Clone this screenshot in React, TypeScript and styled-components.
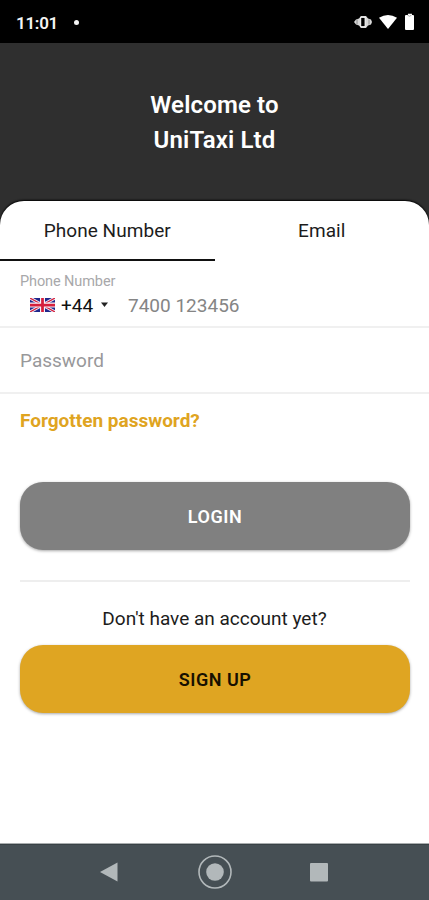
import React from 'react';
import styled, { createGlobalStyle } from 'styled-components';

const GlobalStyle = createGlobalStyle`
  * { box-sizing: border-box; }
  body { margin: 0; background: #fff; font-family: Roboto, "Liberation Sans", sans-serif; }
  button, input { font-family: inherit; }
`;

const Screen = styled.div`
  width: 429px;
  height: 900px;
  display: flex;
  flex-direction: column;
  overflow: hidden;
  background: #2f2f2f;
`;

const StatusBar = styled.header`
  height: 43px;
  flex: none;
  display: flex;
  align-items: center;
  padding: 2px 14px 0 16px;
  background: #000;
  color: #f4f4f4;
`;

const Clock = styled.span`
  width: 58px;
  font-size: 17px;
  font-weight: 600;
  line-height: 20px;
  letter-spacing: -0.3px;
`;

const Dot = styled.span`
  width: 5px;
  height: 5px;
  border-radius: 50%;
  background: #f4f4f4;
`;

const StatusIcons = styled.div`
  margin-left: auto;
  display: flex;
  align-items: center;
  margin-top: -2px;
`;

const Welcome = styled.h1`
  height: 158px;
  flex: none;
  margin: 0;
  padding-top: 45px;
  color: #fff;
  text-align: center;
  font-size: 24px;
  font-weight: 600;
  line-height: 35px;
  letter-spacing: 0.15px;
`;

const Card = styled.main`
  flex: 1;
  display: flex;
  flex-direction: column;
  background: #fff;
  border-radius: 24px 24px 0 0;
  box-shadow: 0 -1px 2px #000;
`;

const Tabs = styled.nav`
  display: flex;
  height: 60px;
`;

const Tab = styled.button<{ $active?: boolean }>`
  flex: 1;
  padding: 1px 0 0;
  border: 0;
  border-bottom: 2px solid ${(p) => (p.$active ? '#111' : 'transparent')};
  background: none;
  color: #1c1c1c;
  font-size: 19px;
  letter-spacing: 0.05px;
`;

const Field = styled.div`
  height: 66px;
  padding: 0 20px;
  border-bottom: 2px solid #f0f0f0;
`;

const PhoneField = styled(Field)`
  height: 67px;
  padding-top: 12px;
`;

const FieldLabel = styled.div`
  color: #a8a8aa;
  font-size: 14.5px;
  line-height: 17px;
  letter-spacing: -0.1px;
`;

const PhoneRow = styled.div`
  display: flex;
  align-items: center;
  height: 30px;
  padding-left: 10px;
`;

const DialCode = styled.span`
  width: 40px;
  margin-left: 6px;
  color: #111;
  font-size: 19px;
`;

const Placeholder = styled.span<{ $tone: string }>`
  color: ${(p) => p.$tone};
  font-size: 19px;
  letter-spacing: 0;
`;

const PasswordField = styled(Field)`
  display: flex;
  align-items: center;
`;

const Forgotten = styled.a`
  margin: 15px 20px 0;
  color: #dfa421;
  font-size: 19px;
  font-weight: 700;
  line-height: 24px;
`;

const Button = styled.button<{ $fill: string; $ink: string }>`
  height: 68px;
  margin: 0 19px 0 20px;
  padding: 0;
  border: 0;
  border-radius: 23px;
  background: ${(p) => p.$fill};
  color: ${(p) => p.$ink};
  box-shadow: 0 1px 3px rgba(0, 0, 0, 0.35);
  font-size: 18px;
  font-weight: 600;
  letter-spacing: 0.5px;
`;

const LoginButton = styled(Button)`
  margin-top: 49px;
`;

const Divider = styled.hr`
  width: 390px;
  height: 2px;
  margin: 30px 0 0 20px;
  border: 0;
  background: #eee;
`;

const Prompt = styled.p`
  margin: 25px 0 14px;
  color: #1c1c1c;
  text-align: center;
  font-size: 19px;
  line-height: 24px;
`;

const NavBar = styled.footer`
  height: 57px;
  flex: none;
  display: flex;
  align-items: center;
  justify-content: center;
  gap: 77px;
  padding-right: 1px;
  border-top: 1px solid #a9adae;
  background: #464f54;
  box-shadow: inset 0 1px 0 #394246;
`;

const UnionJack = () => (
  <svg width="25" height="14" viewBox="0 0 50 28">
    <rect width="50" height="28" rx="2" fill="#20278b" />
    <path d="M0 0 50 28M50 0 0 28" stroke="#f4f2fa" strokeWidth="6" />
    <path d="M0 0 50 28M50 0 0 28" stroke="#d51f3d" strokeWidth="2.5" />
    <path d="M25 0V28M0 14H50" stroke="#f8f4fa" strokeWidth="10" />
    <path d="M25 0V28M0 14H50" stroke="#d51f3d" strokeWidth="5.5" />
  </svg>
);

export default function App() {
  return (
    <>
      <GlobalStyle />
      <Screen>
        <StatusBar>
          <Clock>11:01</Clock>
          <Dot />
          <StatusIcons>
            <svg width="62" height="20" viewBox="0 0 62 20">
              <path d="M1 10 3 7.5l3-1L8 4h5l2 2.500 3 1 1 2.500-1 2.500-3 1L13 16H8l-2-2.500-3-1Z" fill="#d9d9d9" />
              <rect x="7.700" y="5.300" width="4.400" height="9.400" fill="#000" stroke="#fff" strokeWidth="1" />
              <path d="M4 7.500v5M16 7.500v5" stroke="#888" strokeWidth="1" />
              <path d="M26 5.800Q35 .2 44 5.800L35 17Z" fill="#fff" />
              <path d="M53 3h2V1.800h4V3h1q1 0 1 1v13q0 1-1 1h-7q-1 0-1-1V4q0-1 1-1Z" fill="#fff" />
              <path d="M54.500 3.200q2 2 4 0" stroke="#aaa" fill="none" />
            </svg>
          </StatusIcons>
        </StatusBar>
        <Welcome>
          Welcome to
          <br />
          UniTaxi Ltd
        </Welcome>
        <Card>
          <Tabs>
            <Tab $active>Phone Number</Tab>
            <Tab>Email</Tab>
          </Tabs>
          <PhoneField>
            <FieldLabel>Phone Number</FieldLabel>
            <PhoneRow>
              <UnionJack />
              <DialCode>+44</DialCode>
              <svg width="27" height="6" viewBox="0 0 27 6">
                <path d="M0 .5h7L3.500 5Z" fill="#222" />
              </svg>
              <Placeholder $tone="#858585">7400 123456</Placeholder>
            </PhoneRow>
          </PhoneField>
          <PasswordField>
            <Placeholder $tone="#98989a">Password</Placeholder>
          </PasswordField>
          <Forgotten>Forgotten password?</Forgotten>
          <LoginButton $fill="#808080" $ink="#fff">LOGIN</LoginButton>
          <Divider />
          <Prompt>Don't have an account yet?</Prompt>
          <Button $fill="#dfa522" $ink="#171000">SIGN UP</Button>
        </Card>
        <NavBar>
          <svg width="20" height="20" viewBox="0 0 20 20">
            <path d="M0 10 17.500.5v19Z" fill="#b2b8ba" />
          </svg>
          <svg width="36" height="36" viewBox="0 0 36 36">
            <circle cx="18" cy="18" r="16" fill="none" stroke="#b2b8ba" strokeWidth="1.6" />
            <circle cx="18" cy="18" r="8.8" fill="#b2b8ba" />
          </svg>
          <svg width="18" height="20" viewBox="0 0 18 20">
            <rect y="1" width="18" height="18.500" rx="1" fill="#b2b8ba" />
          </svg>
        </NavBar>
      </Screen>
    </>
  );
}
